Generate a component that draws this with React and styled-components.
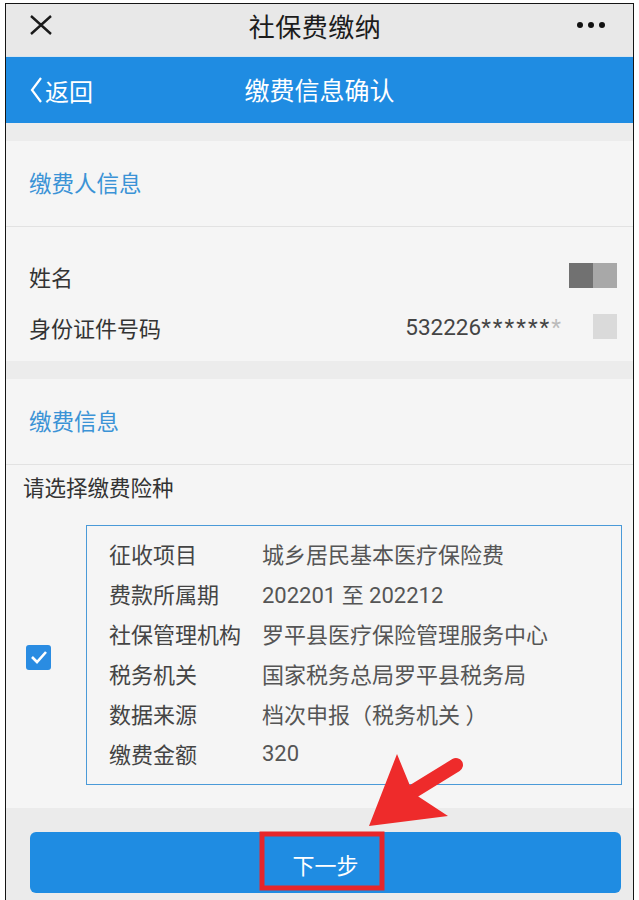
import React from "react";
import styled, { createGlobalStyle } from "styled-components";

const GlobalStyle = createGlobalStyle`
  html, body {
    margin: 0;
    padding: 0;
    background: #ffffff;
  }
  body {
    font-family: Roboto, "Noto Sans CJK SC", sans-serif;
  }
`;

const Page = styled.div`
  position: relative;
  width: 639px;
  height: 900px;
  overflow: hidden;
  padding: 3px 0 0 5px;
  box-sizing: border-box;
`;

const Frame = styled.div`
  width: 629px;
  height: 900px;
  box-sizing: border-box;
  border: 1.5px solid #151515;
  border-bottom: none;
  background: #f5f5f5;
  display: flex;
  flex-direction: column;
`;

const TopBar = styled.div`
  height: 53px;
  flex: none;
  background: #e8e8e8;
  display: flex;
  align-items: center;
  justify-content: space-between;
  padding: 0 28px 10px 23px;
  box-sizing: border-box;
  border-bottom: 1px solid #d6e4ef;
`;

const TopTitle = styled.div`
  font-size: 26px;
  color: #1c1c1c;
  letter-spacing: 0.5px;
`;

const Dots = styled.div`
  display: flex;
  gap: 5px;
  & > span {
    width: 6px;
    height: 6px;
    border-radius: 50%;
    background: #111;
  }
`;

const NavBar = styled.div`
  height: 66px;
  flex: none;
  background: #1f8ce2;
  display: flex;
  align-items: center;
  position: relative;
  padding-left: 23px;
  color: #fff;
`;

const Back = styled.div`
  display: flex;
  align-items: center;
  font-size: 24px;
  gap: 2px;
`;

const NavTitle = styled.div`
  position: absolute;
  left: 0;
  right: 0;
  text-align: center;
  font-size: 25px;
  padding-bottom: 2px;
  pointer-events: none;
`;

const Band = styled.div`
  height: ${(p) => p.$h || 18}px;
  flex: none;
  background: #ececec;
`;

const SectionHead = styled.div`
  height: 86px;
  flex: none;
  box-sizing: border-box;
  border-bottom: 1.5px solid #e2e2e2;
  display: flex;
  align-items: center;
  padding: 0 23px 4px;
  font-size: 22.5px;
  color: #3b93d6;
`;

const InfoList = styled.div`
  padding: 23px 0 9px;
`;

const InfoRow = styled.div`
  height: 51px;
  display: flex;
  align-items: center;
  justify-content: space-between;
  padding: 0 16px 0 23px;
  font-size: 22px;
  color: #333;
`;

const Masked = styled.div`
  display: flex;
  align-items: center;
`;

const Blur = styled.span`
  display: block;
  width: ${(p) => p.$w}px;
  height: ${(p) => p.$h}px;
  background: ${(p) => p.$c};
  filter: blur(0.6px);
`;

const IdText = styled.span`
  font-size: 22.5px;
  color: #444;
  margin-right: 32px;
  & > b {
    font-weight: normal;
    letter-spacing: 2px;
  }
  & > i {
    font-style: normal;
    color: #bbb;
  }
`;

const Prompt = styled.div`
  padding: 6px 17px 0;
  height: 60px;
  box-sizing: border-box;
  font-size: 21.5px;
  color: #333;
`;

const Choice = styled.div`
  display: flex;
  align-items: center;
  padding: 0 11px 0 20px;
  height: 283px;
  box-sizing: border-box;
  padding-bottom: 23px;
`;

const CheckBox = styled.div`
  width: 25px;
  height: 25px;
  border-radius: 3px;
  background: #2a8ce2;
  display: grid;
  place-items: center;
  flex: none;
  margin-top: 4px;
`;

const DetailBox = styled.div`
  margin-left: 35px;
  flex: 1;
  height: 260px;
  box-sizing: border-box;
  border: 1.5px solid #4a9ad8;
  padding: 7px 0 0 22px;
`;

const DetailRow = styled.div`
  height: 40px;
  display: flex;
  align-items: center;
  font-size: 22px;
  color: #444;
`;

const DetailLabel = styled.span`
  width: 153px;
  flex: none;
`;

const DetailValue = styled.span`
  color: #555;
`;

const Footer = styled.div`
  flex: 1;
  background: #ebebeb;
  padding: 24px 12px 0 24px;
`;

const NextButton = styled.button`
  width: 100%;
  height: 61px;
  border: none;
  border-radius: 6px;
  background: #1f8ce2;
  color: #fff;
  font-family: inherit;
  font-size: 22px;
  padding: 0;
  padding-top: 2px;
`;

const Overlay = styled.svg`
  position: absolute;
  left: 0;
  top: 0;
  pointer-events: none;
`;

const details = [
  ["征收项目", "城乡居民基本医疗保险费"],
  ["费款所属期", "202201 至 202212"],
  ["社保管理机构", "罗平县医疗保险管理服务中心"],
  ["税务机关", "国家税务总局罗平县税务局"],
  ["数据来源", "档次申报（税务机关 ）"],
  ["缴费金额", "320"],
];

export default function App() {
  return (
    <Page>
      <GlobalStyle />
      <Frame>
        <TopBar>
          <svg width="24" height="20" viewBox="0 0 24 20">
            <path d="M2 1 L22 19 M22 1 L2 19" stroke="#1a1a1a" strokeWidth="2.4" fill="none" />
          </svg>
          <TopTitle>社保费缴纳</TopTitle>
          <Dots>
            <span />
            <span />
            <span />
          </Dots>
        </TopBar>
        <NavBar>
          <Back>
            <svg width="14" height="28" viewBox="0 0 14 28">
              <path d="M12 2 L3 14 L12 26" stroke="#fff" strokeWidth="2.2" fill="none" />
            </svg>
            返回
          </Back>
          <NavTitle>缴费信息确认</NavTitle>
        </NavBar>
        <Band />
        <SectionHead>缴费人信息</SectionHead>
        <InfoList>
          <InfoRow>
            姓名
            <Masked>
              <Blur $w={24} $h={25} $c="#717171" />
              <Blur $w={24} $h={25} $c="#a8a8a8" />
            </Masked>
          </InfoRow>
          <InfoRow>
            身份证件号码
            <Masked>
              <IdText>
                532226<b>******</b><i>*</i>
              </IdText>
              <Blur $w={24} $h={25} $c="#dadada" />
            </Masked>
          </InfoRow>
        </InfoList>
        <Band />
        <SectionHead>缴费信息</SectionHead>
        <Prompt>请选择缴费险种</Prompt>
        <Choice>
          <CheckBox>
            <svg width="18" height="14" viewBox="0 0 18 14">
              <path d="M2 7 L7 12 L16 2" stroke="#fff" strokeWidth="2.6" fill="none" />
            </svg>
          </CheckBox>
          <DetailBox>
            {details.map(([label, value]) => (
              <DetailRow key={label}>
                <DetailLabel>{label}</DetailLabel>
                <DetailValue>{value}</DetailValue>
              </DetailRow>
            ))}
          </DetailBox>
        </Choice>
        <Footer>
          <NextButton>下一步</NextButton>
        </Footer>
      </Frame>
      <Overlay width="639" height="900" viewBox="0 0 639 900">
        <rect x="262" y="834" width="120" height="54" fill="none" stroke="#e6262a" strokeWidth="5" />
        <line x1="404" y1="797" x2="456" y2="765" stroke="#ee2b2b" strokeWidth="14" strokeLinecap="round" />
        <polygon points="369,826 397,754 413,793 448,816" fill="#ee2b2b" />
      </Overlay>
    </Page>
  );
}
